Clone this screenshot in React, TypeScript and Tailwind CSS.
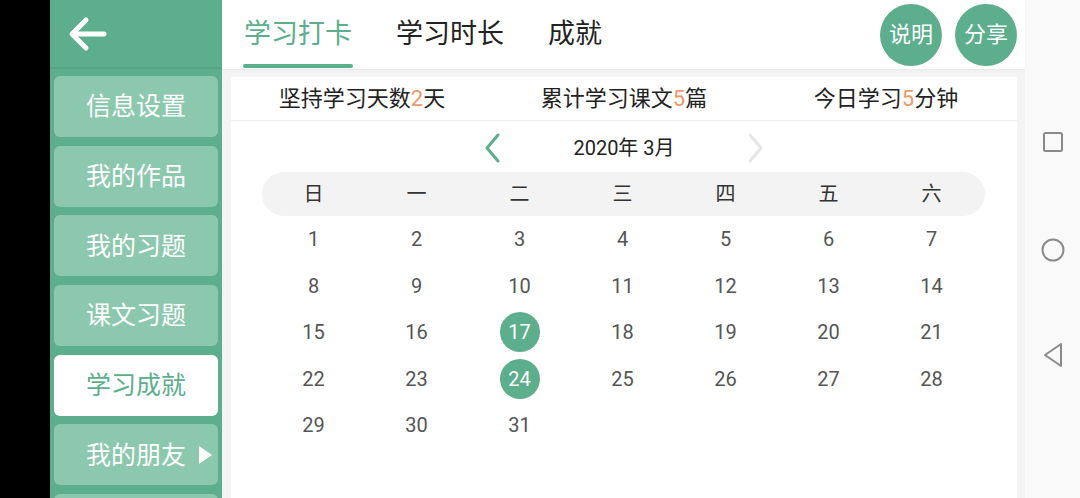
import React from "react";

const menu = ["信息设置", "我的作品", "我的习题", "课文习题", "学习成就", "我的朋友", ""];

const weeks = ["日", "一", "二", "三", "四", "五", "六"];

const days: (number | null)[][] = [
  [1, 2, 3, 4, 5, 6, 7],
  [8, 9, 10, 11, 12, 13, 14],
  [15, 16, 17, 18, 19, 20, 21],
  [22, 23, 24, 25, 26, 27, 28],
  [29, 30, 31, null, null, null, null],
];

const checked = new Set([17, 24]);

function BackArrow() {
  return (
    <svg width="40" height="36" viewBox="0 0 40 36" fill="none">
      <path d="M36 18H6M18 4L4 18l14 14" stroke="#fff" strokeWidth="5" strokeLinecap="round" strokeLinejoin="round" />
    </svg>
  );
}

function Chevron({ dir, color }: { dir: "left" | "right"; color: string }) {
  return (
    <svg width="18" height="32" viewBox="0 0 18 32" fill="none">
      <path
        d={dir === "left" ? "M15 3L4 16l11 13" : "M3 3l11 13L3 29"}
        stroke={color}
        strokeWidth="3"
        strokeLinecap="round"
        strokeLinejoin="round"
      />
    </svg>
  );
}

export default function App() {
  return (
    <div
      className="w-[1080px] h-[498px] flex overflow-hidden bg-white"
      style={{ fontFamily: '"Roboto", "Noto Sans CJK SC", sans-serif' }}
    >
      <div className="w-[50px] shrink-0 bg-black" />

      {/* side menu */}
      <div className="w-[172px] shrink-0 bg-[#5cae8d] flex flex-col overflow-hidden">
        <div className="h-[69px] shrink-0 flex items-center pl-[18px] border-b-[2px] border-[#55a585]">
          <BackArrow />
        </div>
        <div className="flex flex-col gap-[8.7px] px-[4px] pt-[7px]">
          {menu.map((m, i) => {
            const active = m === "学习成就";
            return (
              <div
                key={i}
                className={
                  "h-[61px] shrink-0 rounded-[6px] flex items-center justify-center text-[25px] pt-[1px] " +
                  (active ? "bg-white text-[#5cae8d]" : "bg-[#8cc8ae] text-white")
                }
              >
                <span className="relative">
                  {m}
                  {m === "我的朋友" && (
                    <span className="absolute left-[113px] top-1/2 -translate-y-1/2 w-0 h-0 border-y-[9px] border-y-transparent border-l-[13px] border-l-white" />
                  )}
                </span>
              </div>
            );
          })}
        </div>
      </div>

      {/* main */}
      <div className="flex-1 flex flex-col">
        <div className="h-[69px] shrink-0 bg-white flex items-center pl-[22px] pr-[8px] shadow-[0_1px_2px_rgba(0,0,0,0.06)] relative z-10">
          <div className="flex gap-[44px] h-full">
            <div className="relative flex items-center text-[27px] text-[#5cae8d]">
              学习打卡
              <div className="absolute left-[-1px] right-[-1px] bottom-[1px] h-[4px] rounded-full bg-[#5cae8d]" />
            </div>
            <div className="flex items-center text-[27px] text-[#222]">学习时长</div>
            <div className="flex items-center text-[27px] text-[#222]">成就</div>
          </div>
          <div className="ml-auto flex gap-[13px]">
            <div className="w-[62px] h-[62px] rounded-full bg-[#5cae8d] text-white text-[22px] flex items-center justify-center">
              说明
            </div>
            <div className="w-[62px] h-[62px] rounded-full bg-[#5cae8d] text-white text-[22px] flex items-center justify-center">
              分享
            </div>
          </div>
        </div>

        <div className="flex-1 bg-[#f4f4f4] pl-[9px] pr-[8px] pt-[8px] flex">
          <div className="flex-1 bg-white flex flex-col">
            <div className="h-[44px] shrink-0 grid grid-cols-3 border-b border-[#eeeeee] text-[22px] text-[#222]">
              <div className="flex items-center justify-center">
                坚持学习天数<span className="text-[#ec9a6c]">2</span>天
              </div>
              <div className="flex items-center justify-center">
                累计学习课文<span className="text-[#ec9a6c]">5</span>篇
              </div>
              <div className="flex items-center justify-center">
                今日学习<span className="text-[#ec9a6c]">5</span>分钟
              </div>
            </div>

            <div className="h-[51px] shrink-0 flex items-center justify-center gap-[72px] pt-[3px]">
              <Chevron dir="left" color="#5cae8d" />
              <span className="text-[20px] text-[#222]">2020年 3月</span>
              <Chevron dir="right" color="#e6e6e6" />
            </div>

            <div className="ml-[31px] mr-[32px] h-[44px] shrink-0 rounded-full bg-[#f3f3f3] grid grid-cols-7 pr-[2px] text-[20px] text-[#333]">
              {weeks.map((w) => (
                <div key={w} className="flex items-center justify-center">
                  {w}
                </div>
              ))}
            </div>

            <div className="ml-[31px] mr-[34px] flex flex-col">
              {days.map((row, r) => (
                <div key={r} className="h-[46.5px] grid grid-cols-7">
                  {row.map((d, c) => (
                    <div key={c} className="flex items-center justify-center">
                      {d !== null &&
                        (checked.has(d) ? (
                          <span className="w-[40px] h-[40px] rounded-full bg-[#5cae8d] text-white text-[20px] flex items-center justify-center">
                            {d}
                          </span>
                        ) : (
                          <span className="text-[20px] text-[#555]">{d}</span>
                        ))}
                    </div>
                  ))}
                </div>
              ))}
            </div>
          </div>
        </div>
      </div>

      {/* system navigation */}
      <div className="w-[55px] shrink-0 bg-[#f9f9f9] flex flex-col items-center">
        <svg className="mt-[132px]" width="20" height="20" viewBox="0 0 20 20" fill="none">
          <rect x="1" y="1" width="18" height="18" rx="1.5" stroke="#8a8a8a" strokeWidth="2" />
        </svg>
        <svg className="mt-[86px]" width="24" height="24" viewBox="0 0 24 24" fill="none">
          <circle cx="12" cy="12" r="10.5" stroke="#8a8a8a" strokeWidth="2" />
        </svg>
        <svg className="mt-[80px]" width="22" height="26" viewBox="0 0 22 26" fill="none">
          <path d="M19 2L3 13l16 11z" stroke="#8a8a8a" strokeWidth="2" strokeLinejoin="round" />
        </svg>
      </div>
    </div>
  );
}
